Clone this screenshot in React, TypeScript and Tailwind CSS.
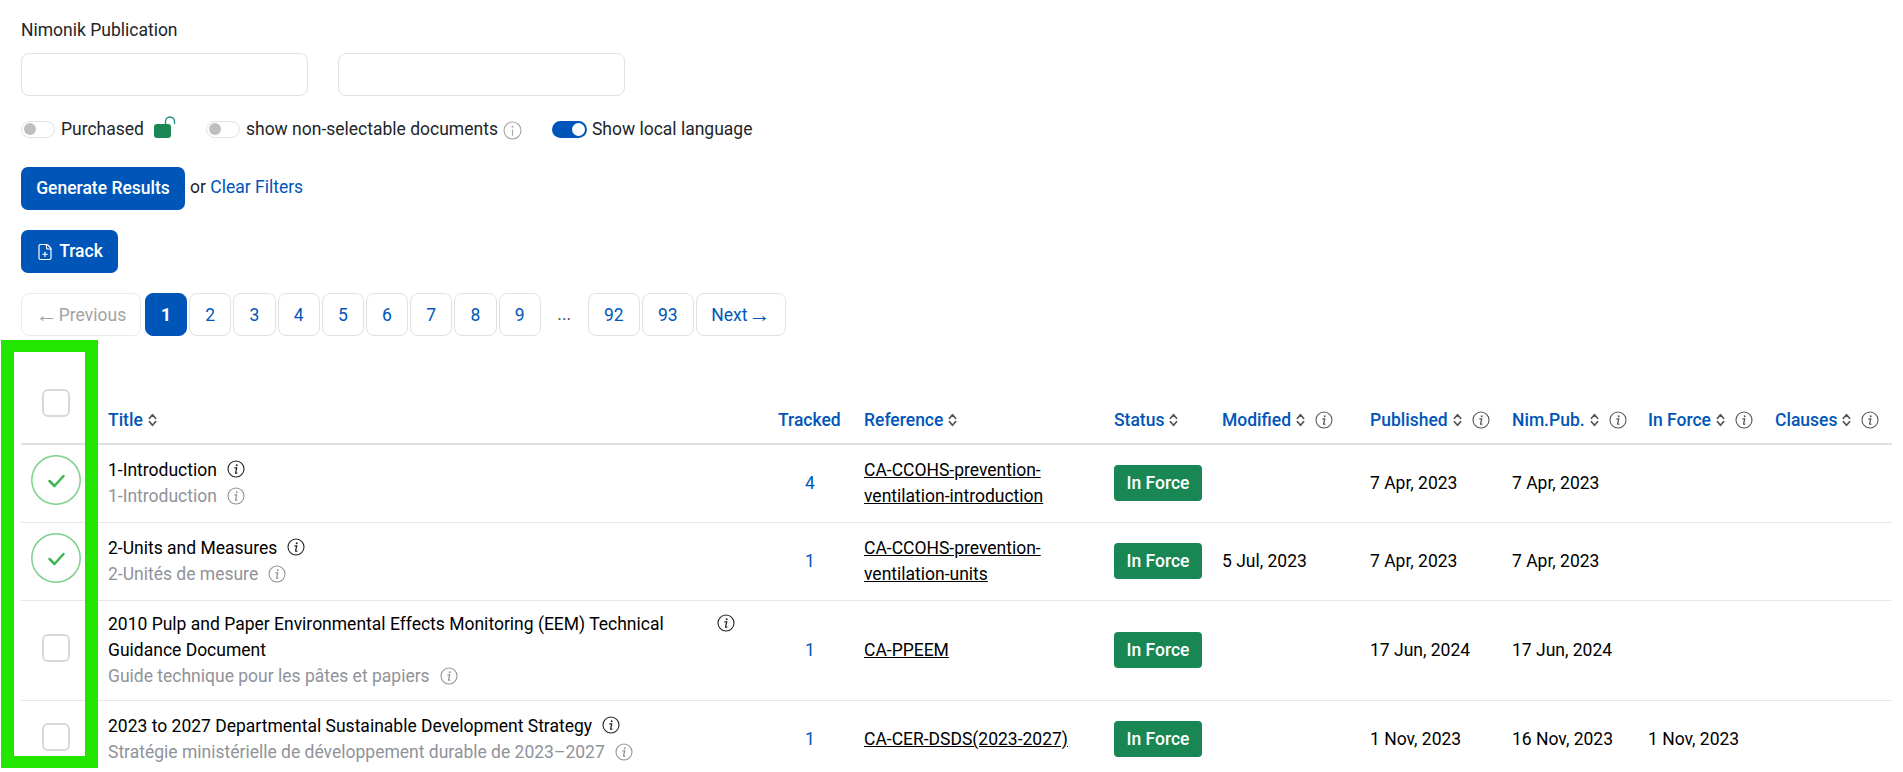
import { FilePlus } from "lucide-react";

const InfoIcon = ({ className = "", plain = false }: { className?: string; plain?: boolean }) => (
  <svg viewBox="0 0 20 20" className={"inline-block h-[18px] w-[18px] shrink-0 " + className} fill="none" stroke="currentColor">
    <circle cx="10" cy="10" r="8.9" strokeWidth="1.2" />
    {plain ? (
      <>
        <circle cx="10" cy="6" r="1" fill="currentColor" stroke="none" />
        <path d="M10 9v6.5" strokeWidth="1.2" />
      </>
    ) : (
      <>
        <circle cx="10.8" cy="5.8" r="1.05" fill="currentColor" stroke="none" />
        <path d="M8.7 8.8h2.1l-1.2 5.3c-.1.7.3 1 1.5.4" strokeWidth="1.4" strokeLinecap="round" />
      </>
    )}
  </svg>
);

const SortIcon = () => (
  <svg viewBox="0 0 10 16" className="inline-block h-[14px] w-[9px] shrink-0 text-[#555]" fill="none" stroke="currentColor" strokeWidth="2" strokeLinecap="round" strokeLinejoin="round">
    <path d="M1.5 6 5 2l3.5 4" />
    <path d="M1.5 10 5 14l3.5-4" />
  </svg>
);

const LockIcon = () => (
  <svg viewBox="0 0 22 22" className="h-[22px] w-[22px]">
    <path d="M11.5 8V5.5a4.5 4.5 0 0 1 9 0V7.5" fill="none" stroke="#168a80" strokeWidth="1.3" strokeLinecap="round" />
    <rect x="0" y="8" width="17" height="14" rx="3" fill="#198754" />
  </svg>
);

const Toggle = ({ on = false }: { on?: boolean }) =>
  on ? (
    <span className="flex h-[17px] w-[35px] items-center justify-end rounded-full bg-[#0056b8] px-[2px]">
      <span className="h-[13px] w-[13px] rounded-full bg-white" />
    </span>
  ) : (
    <span className="flex h-[17px] w-[34px] items-center rounded-full border border-[#dee2e6] bg-white px-[2px]">
      <span className="h-[12px] w-[12px] rounded-full bg-[#bfbfbf]" />
    </span>
  );

const Arrow = ({ glyph }: { glyph: string }) => (
  <span className="font-['Liberation_Sans',sans-serif] text-[22px] leading-none">{glyph}</span>
);

const PageLink = ({ label, active = false, width = "w-[42.2px]" }: { label: React.ReactNode; active?: boolean; width?: string }) => (
  <span
    className={
      "flex h-[43px] items-center justify-center rounded-lg border pt-[1px] " +
      width +
      (active ? " border-[#0056b8] bg-[#0056b8] font-bold text-white" : " border-[#dee2e6] bg-white text-[#0056b8]")
    }
  >
    {label}
  </span>
);

const Head = ({ label, info = true }: { label: string; info?: boolean }) => (
  <span className="inline-flex items-center gap-[5px] whitespace-nowrap font-medium text-[#0056b8]">
    {label}
    <SortIcon />
    {info && <InfoIcon className="ml-[5px] text-[#555]" />}
  </span>
);

type Row = {
  title: string;
  local: string;
  tracked: string;
  ref: string[];
  modified?: string;
  published: string;
  nim: string;
  inForce?: string;
  checked?: boolean;
  wrap?: boolean;
};

const rows: Row[] = [
  { title: "1-Introduction", local: "1-Introduction", tracked: "4", ref: ["CA-CCOHS-prevention-", "ventilation-introduction"], published: "7 Apr, 2023", nim: "7 Apr, 2023", checked: true },
  { title: "2-Units and Measures", local: "2-Unités de mesure", tracked: "1", ref: ["CA-CCOHS-prevention-", "ventilation-units"], modified: "5 Jul, 2023", published: "7 Apr, 2023", nim: "7 Apr, 2023", checked: true },
  { title: "2010 Pulp and Paper Environmental Effects Monitoring (EEM) Technical Guidance Document", local: "Guide technique pour les pâtes et papiers", tracked: "1", ref: ["CA-PPEEM"], published: "17 Jun, 2024", nim: "17 Jun, 2024", wrap: true },
  { title: "2023 to 2027 Departmental Sustainable Development Strategy", local: "Stratégie ministérielle de développement durable de 2023–2027", tracked: "1", ref: ["CA-CER-DSDS(2023-2027)"], published: "1 Nov, 2023", nim: "16 Nov, 2023", inForce: "1 Nov, 2023" },
];

const Checkbox = () => <span className="block h-[28px] w-[28px] rounded-md border-2 border-[#d9d9d9] bg-white" />;

export default function App() {
  return (
    <div className="relative h-[772px] overflow-hidden bg-white px-[21px] pt-[18px] font-['Roboto',sans-serif] text-[17.5px] text-[#212529]">
      <div className="h-[24px] leading-[24px]">Nimonik Publication</div>
      <div className="mt-[11px] flex gap-[30px]">
        <div className="h-[43px] w-[287px] rounded-lg border border-[#dee2e6]" />
        <div className="h-[43px] w-[287px] rounded-lg border border-[#dee2e6]" />
      </div>
      <div className="mt-[23px] flex h-[20px] items-center">
        <Toggle />
        <span className="ml-[6px]">Purchased</span>
        <span className="ml-[10px] -mt-[4px] flex"><LockIcon /></span>
        <span className="ml-[30px]"><Toggle /></span>
        <span className="ml-[6px]">show non-selectable documents</span>
        <InfoIcon plain className="ml-[5px] mt-[3px] h-[19px] w-[19px] text-[#a6a6a6]" />
        <span className="ml-[30px]"><Toggle on /></span>
        <span className="ml-[5px]">Show local language</span>
      </div>
      <div className="mt-[28px] flex items-center">
        <span className="flex h-[43px] w-[164px] items-center justify-center rounded-[7px] bg-[#0056b8] font-medium text-white">Generate Results</span>
        <span className="ml-[5px] -mt-[2px]">or <span className="text-[#0056b8]">Clear Filters</span></span>
      </div>
      <div className="mt-[20px] flex h-[43px] w-[97px] items-center justify-center gap-[5px] rounded-[7px] bg-[#0056b8] font-medium text-white">
        <FilePlus size={18} strokeWidth={1.6} />
        Track
      </div>
      <div className="mt-[20px] flex gap-[2px]">
        <span className="mr-[2px] flex h-[43px] w-[120px] items-center justify-center gap-[1px] rounded-lg border border-[#e9ecef] pt-[1px] text-[#a3a3a3]">
          <Arrow glyph="←" /> Previous
        </span>
        <PageLink label="1" active />
        {["2", "3", "4", "5", "6", "7", "8", "9"].map((p) => (
          <PageLink key={p} label={p} />
        ))}
        <span className="flex h-[43px] w-[43.2px] items-center justify-center text-[#555]">...</span>
        <PageLink label="92" width="w-[52px]" />
        <PageLink label="93" width="w-[52px]" />
        <PageLink
          label={
            <span className="flex items-center gap-[1px]">
              Next <Arrow glyph="→" />
            </span>
          }
          width="w-[90px]"
        />
      </div>

      <table className="mt-[4px] w-[1871px] table-fixed border-collapse">
        <colgroup>
          <col className="w-[79px]" />
          <col className="w-[670px]" />
          <col className="w-[94px]" />
          <col className="w-[250px]" />
          <col className="w-[108px]" />
          <col className="w-[148px]" />
          <col className="w-[142px]" />
          <col className="w-[136px]" />
          <col className="w-[127px]" />
          <col className="w-[117px]" />
        </colgroup>
        <thead>
          <tr className="border-b-2 border-[#dee2e6]">
            <th className="h-[104px] align-bottom pb-[12px] pl-[21px] text-left font-normal">
              <span className="mb-[14px] block"><Checkbox /></span>
            </th>
            <th className="align-bottom pb-[10px] pl-[8px] text-left font-medium"><Head label="Title" info={false} /></th>
            <th className="align-bottom pb-[10px] pl-[8px] text-left font-medium"><span className="text-[#0056b8]">Tracked</span></th>
            <th className="align-bottom pb-[10px] text-left font-medium"><Head label="Reference" info={false} /></th>
            <th className="align-bottom pb-[10px] text-left font-medium"><Head label="Status" info={false} /></th>
            <th className="align-bottom pb-[10px] text-left font-medium"><Head label="Modified" /></th>
            <th className="align-bottom pb-[10px] text-left font-medium"><Head label="Published" /></th>
            <th className="align-bottom pb-[10px] text-left font-medium"><Head label="Nim.Pub." /></th>
            <th className="align-bottom pb-[10px] text-left font-medium"><Head label="In Force" /></th>
            <th className="align-bottom pb-[10px] text-left font-medium"><Head label="Clauses" /></th>
          </tr>
        </thead>
        <tbody>
          {rows.map((r) => (
            <tr key={r.ref[0] + r.title} className="border-b border-[#e6e8ea] leading-[26.4px]">
              {r.checked ? (
                <td className="h-[78px] pl-[10px] pt-[10px] align-top">
                  <svg viewBox="0 0 50 50" className="h-[50px] w-[50px]" fill="none">
                    <circle cx="25" cy="25" r="24.2" stroke="#7fd08a" strokeWidth="1.5" />
                    <path d="M18.5 26 23.5 31 32.5 21" stroke="#3fb553" strokeWidth="2.5" strokeLinecap="round" strokeLinejoin="round" />
                  </svg>
                </td>
              ) : (
                <td className="h-[78px] pl-[21px] align-middle">
                  <span className="mb-[4px] block"><Checkbox /></span>
                </td>
              )}
              <td className={"h-[78px] pl-[8px] align-top " + (r.wrap ? "pb-[10px] pt-[10px]" : "pb-[8px] pt-[12px]")}>
                <div className="flex items-start gap-[10px] text-black">
                  <span className={r.wrap ? "w-[599px]" : ""}>{r.title}</span>
                  <InfoIcon className="mt-[3px] text-[#222]" />
                </div>
                <div className="flex items-start gap-[10px] text-[#8f9399]">
                  <span>{r.local}</span>
                  <InfoIcon className="mt-[4px]" />
                </div>
              </td>
              <td className="pl-[35px] text-[#0056b8]">{r.tracked}</td>
              <td className="text-black underline">
                {r.ref.map((line) => (
                  <div key={line}>{line}</div>
                ))}
              </td>
              <td>
                <span className="flex h-[36px] w-[88px] items-center justify-center rounded bg-[#198754] font-medium text-white">In Force</span>
              </td>
              <td className="text-black">{r.modified}</td>
              <td className="text-black">{r.published}</td>
              <td className="text-black">{r.nim}</td>
              <td className="text-black">{r.inForce}</td>
              <td />
            </tr>
          ))}
        </tbody>
      </table>

      <div className="absolute left-[1px] top-[340px] h-[428px] w-[97px] border-x-[13px] border-y-[12px] border-[#22e600]" />
    </div>
  );
}
